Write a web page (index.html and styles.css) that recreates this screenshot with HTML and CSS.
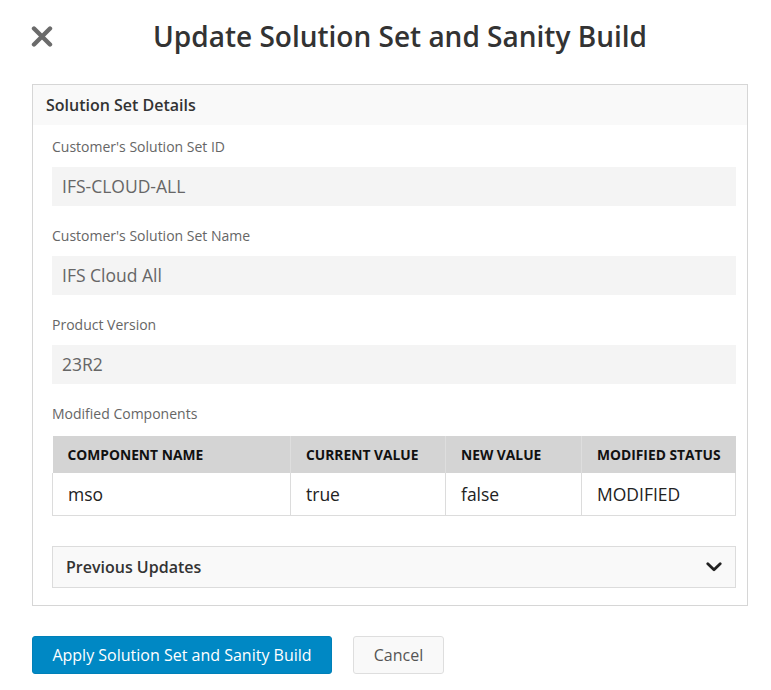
FILE: index.html
```html
<!DOCTYPE html>
<html lang="en">
<head>
    <meta charset="UTF-8">
    <meta name="viewport" content="width=device-width, initial-scale=1.0">
    <title>Update Solution Set and Sanity Build</title>
    <link rel="stylesheet" href="styles.css">
</head>
<body>

    <div class="dialog">
        <!-- Cabeçalho -->
        <div class="dialog-header">
            <button class="close" aria-label="Close">
                <svg width="22" height="21" viewBox="0 0 22 21">
                    <path d="M3 2.5 L19 18.5 M19 2.5 L3 18.5" stroke="#6b6b6b" stroke-width="4.4" stroke-linecap="round"/>
                </svg>
            </button>
            <h1>Update Solution Set and Sanity Build</h1>
        </div>

        <!-- Detalhes -->
        <div class="panel">
            <div class="panel-title">Solution Set Details</div>

            <div class="panel-body">
                <div class="field">
                    <label>Customer's Solution Set ID</label>
                    <div class="value">IFS-CLOUD-ALL</div>
                </div>

                <div class="field">
                    <label>Customer's Solution Set Name</label>
                    <div class="value">IFS Cloud All</div>
                </div>

                <div class="field">
                    <label>Product Version</label>
                    <div class="value">23R2</div>
                </div>

                <label class="table-label">Modified Components</label>
                <table>
                    <thead>
                        <tr>
                            <th class="col-name">Component Name</th>
                            <th class="col-current">Current Value</th>
                            <th class="col-new">New Value</th>
                            <th>Modified Status</th>
                        </tr>
                    </thead>
                    <tbody>
                        <tr>
                            <td>mso</td>
                            <td>true</td>
                            <td>false</td>
                            <td>MODIFIED</td>
                        </tr>
                    </tbody>
                </table>

                <div class="accordion">
                    <span>Previous Updates</span>
                    <svg width="16" height="10" viewBox="0 0 16 10">
                        <path d="M1.8 1.8 L8 7.8 L14.2 1.8" fill="none" stroke="#222" stroke-width="2.8" stroke-linecap="round" stroke-linejoin="round"/>
                    </svg>
                </div>
            </div>
        </div>

        <!-- Botões -->
        <div class="actions">
            <button class="primary">Apply Solution Set and Sanity Build</button>
            <button class="secondary">Cancel</button>
        </div>
    </div>

</body>
</html>
```

FILE: styles.css
```css
/* Estilos Gerais */
* {
    box-sizing: border-box;
    margin: 0;
    padding: 0;
    font-family: 'Open Sans', 'Liberation Sans', sans-serif;
}

body {
    background: #ffffff;
    color: #333;
}

.dialog {
    padding: 0 23px 0 31px;
}

/* Cabeçalho */
.dialog-header {
    display: flex;
    align-items: center;
    height: 76px;
    padding-bottom: 4px;
    padding-right: 1px;
}

.close {
    background: none;
    border: none;
    width: 22px;
    height: 21px;
    display: flex;
    cursor: pointer;
}

.dialog-header h1 {
    flex: 1;
    text-align: center;
    font-size: 28px;
    font-weight: 600;
    color: #333;
}

/* Painel */
.panel {
    border: 1px solid #d6d6d6;
    margin-top: 8px;
    margin-left: 1px;
}

.panel-title {
    background: #f9f9f9;
    height: 40px;
    line-height: 40px;
    padding-left: 13px;
    font-size: 16px;
    font-weight: 600;
    color: #333;
}

.panel-body {
    padding: 12px 11px 17px 19px;
}

/* Campos */
label {
    display: block;
    font-size: 14px;
    line-height: 20px;
    color: #666;
    margin-bottom: 10px;
}

.field {
    margin-bottom: 20px;
}

.value {
    background: #f4f4f4;
    height: 39px;
    line-height: 39px;
    padding-left: 10px;
    font-size: 17.5px;
    color: #666;
}

.table-label {
    margin-bottom: 12px;
}

/* Tabela */
table {
    width: 100%;
    border-collapse: collapse;
    table-layout: fixed;
}

th {
    background: #d4d4d4;
    height: 37px;
    text-align: left;
    padding: 0 0 0 15px;
    font-size: 13.8px;
    font-weight: 700;
    text-transform: uppercase;
    white-space: nowrap;
    color: #111;
    border-left: 1px solid #dedede;
}

th:first-child {
    border-left: none;
}

td {
    height: 42px;
    padding: 0 15px;
    font-size: 17.5px;
    color: #222;
    border: 1px solid #dcdcdc;
    border-top: none;
}

.col-name { width: 238px; }
.col-current { width: 155px; }
.col-new { width: 136px; }

/* Acordeão */
.accordion {
    margin-top: 30px;
    height: 42px;
    background: #f9f9f9;
    border: 1px solid #dcdcdc;
    display: flex;
    align-items: center;
    justify-content: space-between;
    padding: 0 13px 0 13px;
    font-size: 16px;
    font-weight: 600;
    color: #333;
}

/* Botões */
.actions {
    display: flex;
    gap: 21px;
    margin-top: 30px;
    margin-left: 1px;
}

button.primary,
button.secondary {
    height: 38px;
    border-radius: 3px;
    font-size: 16px;
    cursor: pointer;
}

button.primary {
    width: 300px;
    background: #0088c4;
    border: 1px solid #0080b8;
    color: white;
}

button.primary:hover {
    background: #0076aa;
}

button.secondary {
    width: 91px;
    background: #f9f9f9;
    border: 1px solid #dedede;
    color: #555;
}
```
